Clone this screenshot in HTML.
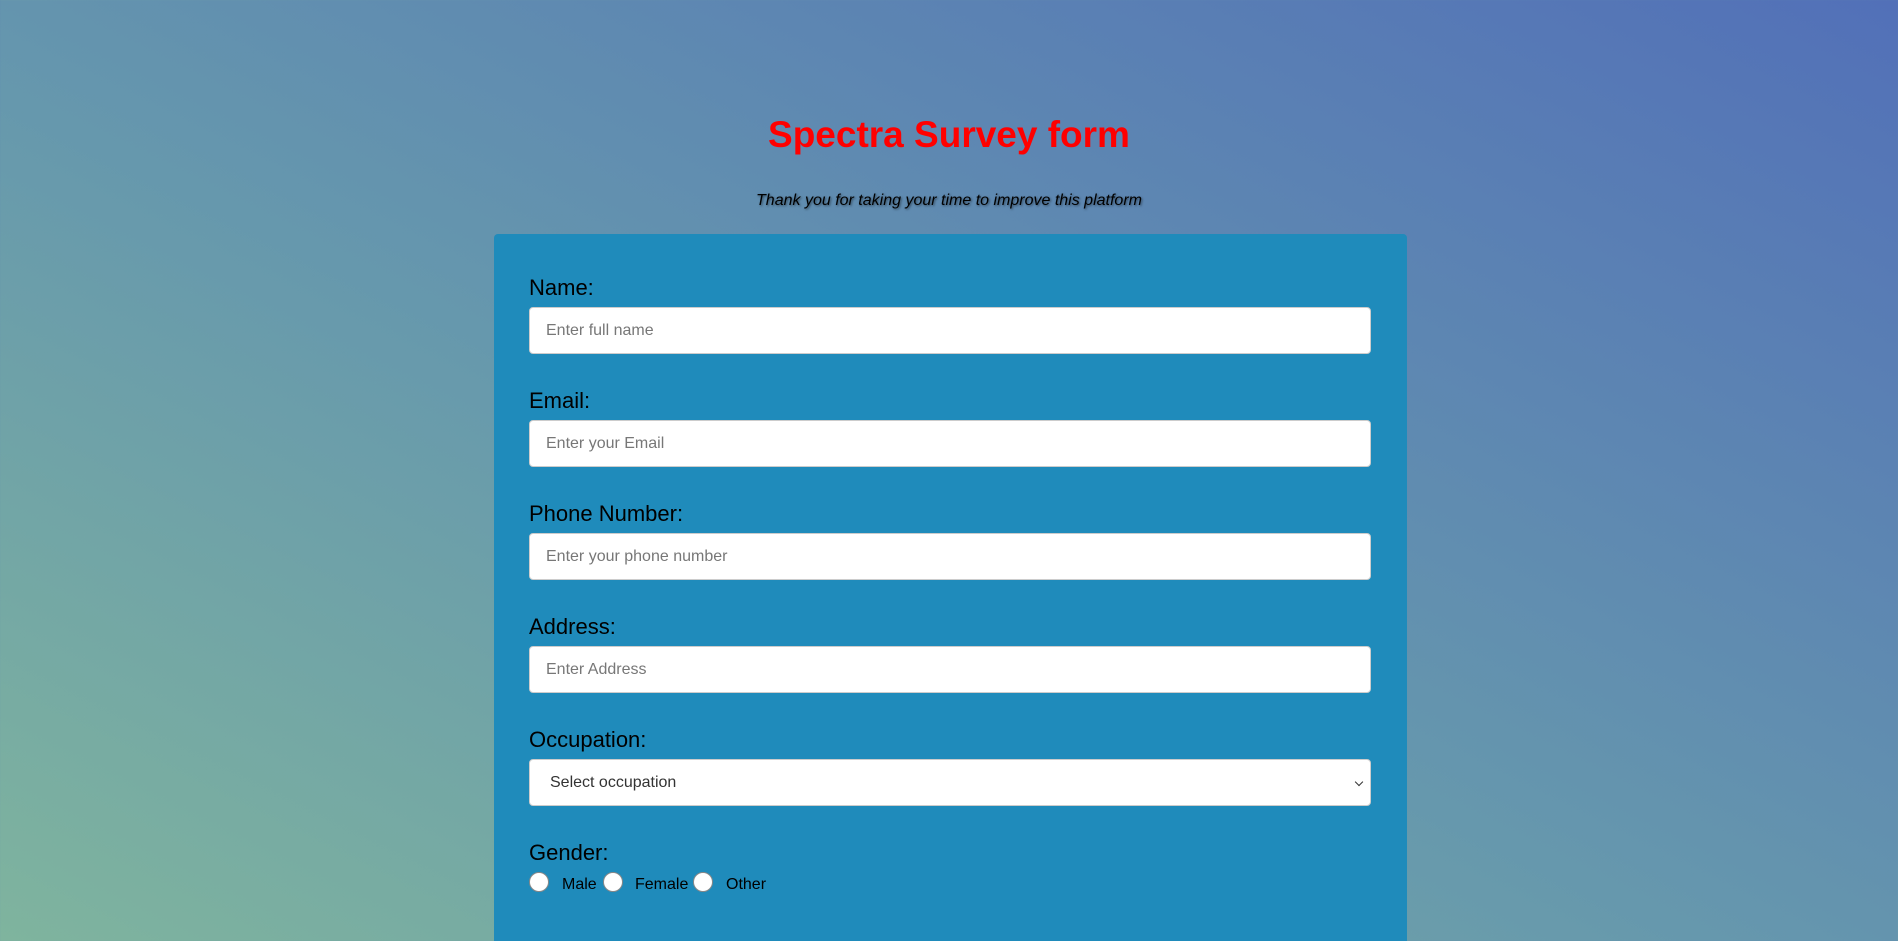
<!DOCTYPE html>
<html><head><meta charset="utf-8"><style>
html,body{margin:0;padding:0;width:1898px;height:941px;overflow:hidden}
body{background:linear-gradient(to top right,#7fb49e 0%,#6698ad 45%,#5270b8 100%);font-family:"Liberation Sans",sans-serif;position:relative}
h1{position:absolute;top:113px;left:0;width:100%;margin:0;text-align:center;color:#f00;font-size:37px;font-weight:bold;line-height:44px}
.sub{position:absolute;top:192px;left:0;width:100%;text-align:center;font-style:italic;font-size:16px;color:#000;text-shadow:1px 1px 2px rgba(0,0,0,.5)}
.form{position:absolute;left:494px;top:234px;width:913px;height:720px;background:#1f8bbb;border-radius:4px}
.g{position:absolute;left:35px;width:842px}
.g label{display:block;font-size:22px;line-height:28px;color:#000;position:relative;top:1px}
.in{margin-top:6px;background:#fff;border:1px solid #ccc;border-radius:4px;font-size:16px;color:#777;line-height:45px;padding-left:16px;box-sizing:border-box;height:47px}
.sel{color:#333;padding-left:20px;position:relative}
.sel:after{content:"";position:absolute;right:8px;top:19px;width:5px;height:5px;border-right:1.5px solid #333;border-bottom:1.5px solid #333;transform:rotate(45deg)}
.radios{position:absolute;left:35px;top:638px;font-size:16px;color:#000}
.r{position:absolute;top:0;width:18px;height:18px;border:1px solid #888;border-radius:50%;background:#fff}
.t{position:absolute;top:4px}
</style></head><body>
<h1>Spectra Survey form</h1>
<div class="sub">Thank you for taking your time to improve this platform</div>
<div class="form">
<div class="g" style="top:39px"><label>Name:</label><div class="in">Enter full name</div></div>
<div class="g" style="top:152px"><label>Email:</label><div class="in">Enter your Email</div></div>
<div class="g" style="top:265px"><label>Phone Number:</label><div class="in">Enter your phone number</div></div>
<div class="g" style="top:378px"><label>Address:</label><div class="in">Enter Address</div></div>
<div class="g" style="top:491px"><label>Occupation:</label><div class="in sel">Select occupation</div></div>
<div class="g" style="top:604px"><label>Gender:</label></div>
<div class="radios">
<span class="r" style="left:0"></span><span class="t" style="left:33px">Male</span>
<span class="r" style="left:74px"></span><span class="t" style="left:106px">Female</span>
<span class="r" style="left:164px"></span><span class="t" style="left:197px">Other</span>
</div>
</div>
</body></html>
